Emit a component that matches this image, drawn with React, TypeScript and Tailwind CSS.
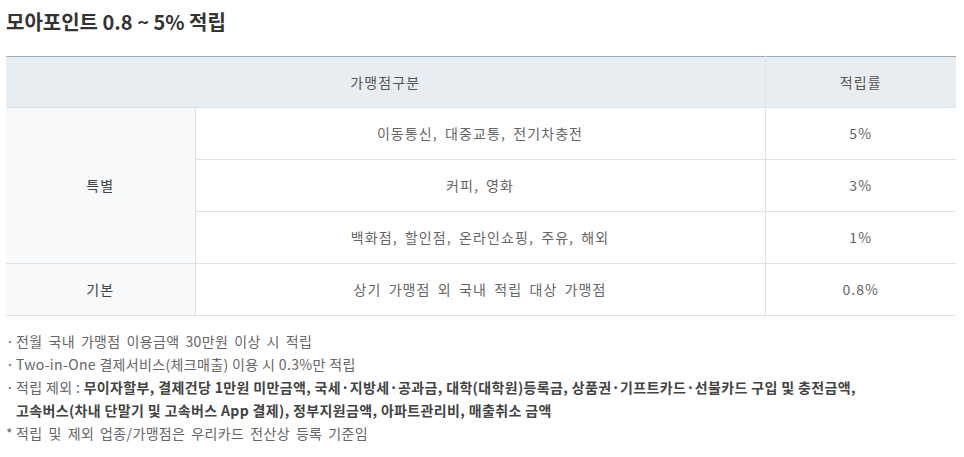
const FONT = "font-['Noto_Sans_CJK_KR','Noto_Sans',sans-serif]"

const SPECIAL = [
  { name: '이동통신, 대중교통, 전기차충전', rate: '5%' },
  { name: '커피, 영화', rate: '3%' },
  { name: '백화점, 할인점, 온라인쇼핑, 주유, 해외', rate: '1%' },
]

function RateTable() {
  return (
    <table className="w-[950px] table-fixed border-collapse border-t border-t-[#9aacbd] text-[14px] tracking-[1.1px] [word-spacing:3px] text-[#666]">
      <colgroup>
        <col className="w-[189px]" />
        <col className="w-[570px]" />
        <col className="w-[191px]" />
      </colgroup>
      <thead>
        <tr className="h-[51px] bg-[#e8edf1] text-[#555]">
          <th colSpan={2} className="border-b border-[#dde2e6] font-normal">가맹점구분</th>
          <th className="border-b border-l border-[#dde2e6] font-normal">적립률</th>
        </tr>
      </thead>
      <tbody>
        {SPECIAL.map((r, i) => (
          <tr key={r.name} className="h-[52px]">
            {i === 0 && (
              <td rowSpan={3} className="border-b border-r border-[#dde2e6] bg-[#f7f9fb] text-center text-[#444]">
                특별
              </td>
            )}
            <td className="border-b border-[#dde2e6] text-center">{r.name}</td>
            <td className="border-b border-l border-[#dde2e6] text-center">{r.rate}</td>
          </tr>
        ))}
        <tr className="h-[52px]">
          <td className="border-b border-r border-[#dde2e6] bg-[#f7f9fb] text-center text-[#444]">기본</td>
          <td className="border-b border-[#dde2e6] text-center">상기 가맹점 외 국내 적립 대상 가맹점</td>
          <td className="border-b border-l border-[#dde2e6] text-center">0.8%</td>
        </tr>
      </tbody>
    </table>
  )
}

function Note({ mark = '·', wide = false, children }: { mark?: string; wide?: boolean; children: React.ReactNode }) {
  return (
    <li className="flex">
      <span className="w-[10px] shrink-0 text-[#666]">{mark}</span>
      <span className={wide ? '[word-spacing:2.5px]' : ''}>{children}</span>
    </li>
  )
}

export default function App() {
  return (
    <div className={`${FONT} w-[964px] h-[457px] bg-white px-[6px] pt-[8px]`}>
      <h2 className="mb-[20px] text-[20px] font-bold leading-[28px] text-[#333]">
        모아포인트 0.8 ~ 5% 적립
      </h2>
      <RateTable />
      <ul className="mt-[14px] text-[14px] leading-[23px] tracking-[0.35px] text-[#666]">
        <Note wide>전월 국내 가맹점 이용금액 30만원 이상 시 적립</Note>
        <Note>Two-in-One 결제서비스(체크매출) 이용 시 0.3%만 적립</Note>
        <Note>
          적립 제외 :{' '}
          <b className="font-bold text-[#444]">
            무이자할부, 결제건당 1만원 미만금액, 국세·지방세·공과금, 대학(대학원)등록금, 상품권·기프트카드·선불카드 구입 및 충전금액,
            <br />
            고속버스(차내 단말기 및 고속버스 App 결제), 정부지원금액, 아파트관리비, 매출취소 금액
          </b>
        </Note>
        <Note mark="*" wide>적립 및 제외 업종/가맹점은 우리카드 전산상 등록 기준임</Note>
      </ul>
    </div>
  )
}
